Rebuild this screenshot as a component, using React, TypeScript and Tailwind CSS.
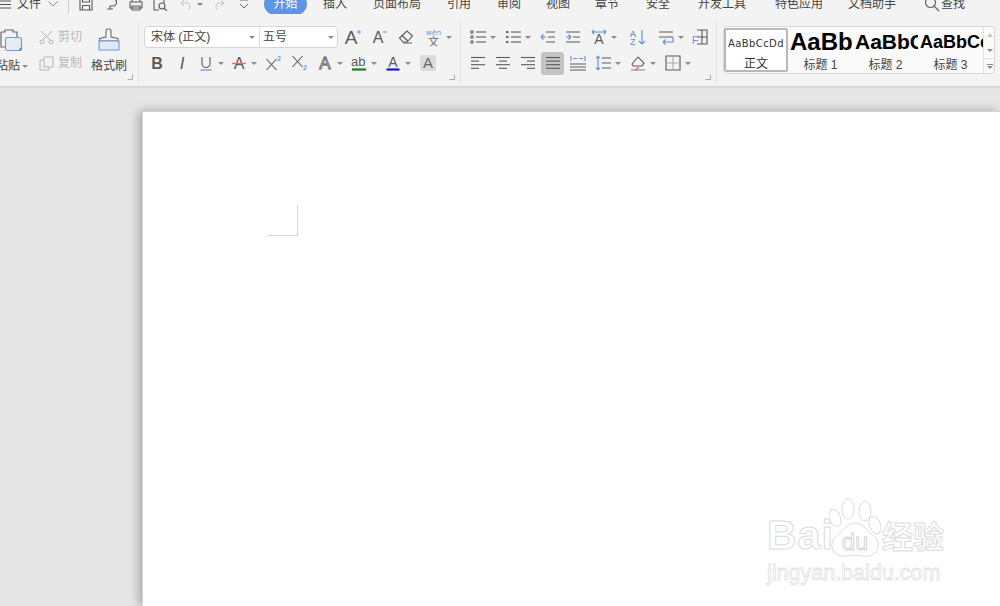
import type { ReactNode } from "react";

const CJK = "font-['Liberation_Sans','Noto_Sans_CJK_SC',sans-serif]";

const TABS = [
  { label: "插入", w: "w-[56px]" },
  { label: "页面布局", w: "w-[68px]" },
  { label: "引用", w: "w-[56px]" },
  { label: "审阅", w: "w-[44px]" },
  { label: "视图", w: "w-[54px]" },
  { label: "章节", w: "w-[44px]" },
  { label: "安全", w: "w-[58px]" },
  { label: "开发工具", w: "w-[70px]" },
  { label: "特色应用", w: "w-[84px]" },
  { label: "文档助手", w: "w-[62px]" },
];

function Ico({ children, w = 16, h = 16 }: { children: ReactNode; w?: number; h?: number }) {
  return (
    <svg width={w} height={h} viewBox={`0 0 ${w} ${h}`} fill="none" stroke="#5a5a5a" strokeWidth="1.1" className="shrink-0">
      {children}
    </svg>
  );
}

function Tri() {
  return <span className="w-0 h-0 shrink-0 border-x-[3px] border-t-[3px] border-x-transparent border-t-[#8a8a8a]" />;
}

function Btn({ w, drop, children }: { w: string; drop?: boolean; children: ReactNode }) {
  return (
    <div className={`${w} h-[22px] shrink-0 flex items-center justify-center gap-[4px]`}>
      {children}
      {drop && <Tri />}
    </div>
  );
}

function Letter({ c, x = 8, y = 13, size = 15, bold, italic, fill = "#5a5a5a" }: { c: string; x?: number; y?: number; size?: number; bold?: boolean; italic?: boolean; fill?: string }) {
  return (
    <text
      x={x}
      y={y}
      textAnchor="middle"
      fontSize={size}
      fontFamily="Liberation Sans"
      fontWeight={bold ? 700 : 400}
      fontStyle={italic ? "italic" : "normal"}
      fill={fill}
      stroke="none"
    >
      {c}
    </text>
  );
}

function Corner() {
  return (
    <svg width="6" height="6" viewBox="0 0 6 6" fill="none" stroke="#a8a8a8" className="absolute right-[5px] bottom-[4px]">
      <path d="M0.5 5.5h5v-5M5.5 5.5" />
    </svg>
  );
}

function Lines({ rows }: { rows: [number, number][] }) {
  return (
    <Ico>
      {rows.map(([x1, x2], i) => (
        <path key={i} d={`M${x1} ${2.5 + i * 3.6}H${x2}`} />
      ))}
    </Ico>
  );
}

function Clipboard() {
  return (
    <svg width="23" height="24" viewBox="0 0 23 24" fill="none" className="shrink-0">
      <path d="M1 4h4V2h8v2h4v6M1 4v15h5" stroke="#6a6a6a" strokeWidth="1.2" />
      <rect x="5.5" y="9.5" width="16" height="13" rx="2" fill="#e6ecf6" stroke="#6f9ce0" strokeWidth="1.2" />
      <path d="M19 22.5l2.5-2.5" stroke="#4a7fd6" strokeWidth="1.5" />
    </svg>
  );
}

function Brush() {
  return (
    <svg width="22" height="24" viewBox="0 0 22 24" fill="none" className="shrink-0">
      <path d="M8 9V2.500a1.500 1.500 0 0 1 1.500-1.500h2A1.500 1.500 0 0 1 13 2.500V9l7 1.500V13H1.500v-2.500z" stroke="#6a6a6a" strokeWidth="1.1" />
      <path d="M1 13h20v9H1z" fill="#dfe8f7" stroke="#6f9ce0" strokeWidth="1.1" />
    </svg>
  );
}

function TopBar() {
  return (
    <div className="h-[14px] overflow-hidden">
      <div className="-mt-[8px] h-[24px] flex items-center text-[12px] text-[#444]">
        <svg width="11" height="9" viewBox="0 0 11 9" stroke="#555" className="shrink-0 mt-[1px]">
          <path d="M0 1h11M0 4.500h11M0 8h11" />
        </svg>
        <span className="ml-[6px] w-[31px]">文件</span>
        <svg width="10" height="6" viewBox="0 0 10 6" fill="none" stroke="#888" className="shrink-0">
          <path d="M0.500 0.500L5 5l4.500-4.500" />
        </svg>
        <span className="ml-[10px] w-px h-[24px] bg-[#d0d0d0] shrink-0" />
        <div className="ml-[10px] flex w-[185px] shrink-0 items-center">
          <div className="w-[26px] flex">
            <Ico w={14} h={14}><path d="M1 1h12v12H1zM3.500 1v4h7V1M3.500 13V8.500h7V13" /></Ico>
          </div>
          <div className="w-[24px] flex">
            <Ico w={14} h={14}><path d="M2 2h6a3.500 3.500 0 0 1 0 7H5v3M2 12h6" /></Ico>
          </div>
          <div className="w-[24px] flex">
            <Ico w={14} h={14}><path d="M3 5V1h8v4M1 5h12v6H1zM3 9h8v4H3z" /></Ico>
          </div>
          <div className="w-[27px] flex">
            <Ico w={15} h={14}><path d="M11 6V1H1v12h5" /><circle cx="9" cy="9" r="3" /><path d="M11 11l3 3" /></Ico>
          </div>
          <div className="w-[17px] flex">
            <svg width="13" height="12" viewBox="0 0 13 12" fill="none" stroke="#c4c4c4"><path d="M1 5l3-3M1 5l3 3M1 5h7a4 4 0 0 1 0 7" /></svg>
          </div>
          <div className="w-[16px] flex items-center"><Tri /></div>
          <div className="w-[26px] flex">
            <svg width="12" height="12" viewBox="0 0 12 12" fill="none" stroke="#c4c4c4"><path d="M11 5L8 2M11 5L8 8M11 5H5a4 4 0 0 0 0 7" /></svg>
          </div>
          <div className="w-[25px] flex">
            <svg width="10" height="10" viewBox="0 0 10 10" fill="none" stroke="#666"><path d="M1 1h8M1 5l4 4 4-4" /></svg>
          </div>
        </div>
        <div className="w-[43px] shrink-0 h-[22px] rounded-full bg-[#5f95e6] text-white text-center leading-[22px]">开始</div>
        {TABS.map((t) => (
          <span key={t.label} className={`${t.w} shrink-0 text-center`}>
            {t.label}
          </span>
        ))}
        <svg width="16" height="16" viewBox="0 0 16 16" fill="none" stroke="#666" strokeWidth="1.2" className="ml-[21px] shrink-0">
          <circle cx="6.500" cy="6.500" r="5" />
          <path d="M10 10l5 5" />
        </svg>
        <span className="ml-px">查找</span>
      </div>
    </div>
  );
}

function ClipGroup() {
  return (
    <div className="relative w-[139px] shrink-0 flex border-r border-[#e2e2e2] pt-[3px] text-[12px] text-[#444]">
      <div className="w-[31px] shrink-0 flex flex-col overflow-hidden">
        <div className="pt-[2px] h-[26px]"><Clipboard /></div>
        <div className="mt-[7px] h-[14px] flex items-center gap-[2px] whitespace-nowrap -ml-[4px]">
          <span>粘贴</span>
          <Tri />
        </div>
      </div>
      <div className="w-[59px] shrink-0 flex flex-col gap-[4px] text-[#b9b9b9]">
        <div className="h-[22px] pl-[8px] flex items-center gap-[4px]">
          <svg width="15" height="15" viewBox="0 0 15 15" fill="none" stroke="#b5b5b5">
            <path d="M2 1l9 9M13 1L4 10" />
            <circle cx="3" cy="12" r="2" />
            <circle cx="12" cy="12" r="2" />
          </svg>
          <span>剪切</span>
        </div>
        <div className="h-[22px] pl-[8px] flex items-center gap-[4px]">
          <svg width="15" height="15" viewBox="0 0 15 15" fill="none" stroke="#b5b5b5">
            <path d="M5 1h9v10H5z" />
            <path d="M5 4H1v10h9v-3" />
          </svg>
          <span>复制</span>
        </div>
      </div>
      <div className="w-[38px] shrink-0 flex flex-col items-center">
        <div className="pt-[2px] h-[26px]"><Brush /></div>
        <span className="mt-[7px] h-[14px] leading-[14px] whitespace-nowrap">格式刷</span>
      </div>
      <Corner />
    </div>
  );
}

function FontGroup() {
  return (
    <div className="relative w-[322px] shrink-0 border-r border-[#e2e2e2] pt-[3px] pl-[5px] flex flex-col gap-[4px]">
      <div className="flex">
        <div className="w-[194px] h-[22px] shrink-0 flex bg-white border border-[#d6d6d6] rounded-[4px] text-[12px] text-[#444]">
          <div className="w-[115px] border-r border-[#e0e0e0] pl-[6px] pr-[4px] flex items-center justify-between">
            <span>宋体 (正文)</span>
            <Tri />
          </div>
          <div className="flex-1 pl-[3px] pr-[3px] flex items-center justify-between">
            <span>五号</span>
            <Tri />
          </div>
        </div>
        <div className="ml-[2px] flex">
          <Btn w="w-[26px]">
            <Ico w={18} h={18}><Letter c="A" x={7} y={16} size={19} /><path d="M13 4h4M15 2v4" stroke="#6f9ce0" /></Ico>
          </Btn>
          <Btn w="w-[26px]">
            <Ico><Letter c="A" x={7} y={14} size={16} /><path d="M12 3h4" stroke="#6f9ce0" /></Ico>
          </Btn>
          <Btn w="w-[28px]">
            <Ico><path d="M1.500 9L9 2l5.500 5L9 13H5z" /><path d="M4 6.500L10 12M5 14h9" /></Ico>
          </Btn>
          <Btn w="w-[36px]" drop>
            <svg width="17" height="18" viewBox="0 0 17 18" className="shrink-0">
              <text x="8.500" y="6.500" textAnchor="middle" fontSize="7.500" fontFamily="DejaVu Sans" fill="#6f9ce0">wén</text>
              <text x="8.500" y="17.500" textAnchor="middle" fontSize="11" fontFamily="Noto Sans CJK SC" fill="#666">文</text>
            </svg>
          </Btn>
        </div>
      </div>
      <div className="flex">
        <Btn w="w-[25px]"><Ico><Letter c="B" size={16} y={14} bold /></Ico></Btn>
        <Btn w="w-[25px]"><Ico><Letter c="I" size={17} y={14} italic /></Ico></Btn>
        <Btn w="w-[33px]" drop>
          <Ico><path d="M4 2v6.500a4 4 0 0 0 8 0V2" /><path d="M2.500 15h11" stroke="#6f9ce0" strokeWidth="1.400" /></Ico>
        </Btn>
        <Btn w="w-[34px]" drop>
          <Ico><Letter c="A" size={16} y={14} /><path d="M1 8.500h14" stroke="#e06a6a" strokeWidth="1.300" /></Ico>
        </Btn>
        <Btn w="w-[26px]">
          <Ico><path d="M0.500 4l10 11M10.500 4l-10 11" /><text x="11" y="6" fontSize="7" fontWeight="700" fontFamily="Liberation Sans" fill="#6f9ce0" stroke="none">2</text></Ico>
        </Btn>
        <Btn w="w-[26px]">
          <Ico><path d="M0.500 1l10 11M10.500 1l-10 11" /><text x="11" y="15" fontSize="7" fontWeight="700" fontFamily="Liberation Sans" fill="#6f9ce0" stroke="none">2</text></Ico>
        </Btn>
        <Btn w="w-[34px]" drop>
          <Ico><text x="8" y="14" textAnchor="middle" fontSize="17" fontFamily="Liberation Sans" fill="#f3f3f3" stroke="#5a5a5a" strokeWidth="0.800">A</text></Ico>
        </Btn>
        <Btn w="w-[34px]" drop>
          <Ico>
            <text x="0" y="11" fontSize="13" fontFamily="Liberation Sans" fill="#5a5a5a" stroke="none">ab</text>
            <path d="M1 14.500h14" stroke="#0a8a0a" strokeWidth="2.200" />
          </Ico>
        </Btn>
        <Btn w="w-[34px]" drop>
          <Ico>
            <text x="8" y="12" textAnchor="middle" fontSize="14" fontFamily="Liberation Sans" fill="#5a5a5a" stroke="none">A</text>
            <path d="M1.500 14.500h13" stroke="#1414e0" strokeWidth="2.200" />
          </Ico>
        </Btn>
        <Btn w="w-[26px]">
          <div className="w-[16px] h-[16px] bg-[#dcdcdc] rounded-[2px] flex items-center justify-center">
            <Ico><Letter c="A" size={15} fill="#666" /></Ico>
          </div>
        </Btn>
      </div>
      <Corner />
    </div>
  );
}

function ListIcon({ dots }: { dots: boolean }) {
  return (
    <Ico>
      {[3, 8, 13].map((y) => (
        <g key={y}>
          {dots ? (
            <circle cx="2" cy={y} r="1.200" />
          ) : (
            <path d={`M1 ${y}h2.500`} strokeWidth="1.800" />
          )}
          <path d={`M6 ${y}h10`} />
        </g>
      ))}
    </Ico>
  );
}

function ParaGroup() {
  return (
    <div className="relative w-[256px] shrink-0 border-r border-[#e2e2e2] pt-[3px] pl-[5px] flex flex-col gap-[4px]">
      <div className="flex">
        <Btn w="w-[34px]" drop><ListIcon dots /></Btn>
        <Btn w="w-[35px]" drop><ListIcon dots={false} /></Btn>
        <Btn w="w-[25px]">
          <Ico><path d="M6 3h9M8 8h7M6 13h9" /><path d="M6 8H1M1 8l2.500-2.500M1 8l2.500 2.500" stroke="#5b8fdf" /></Ico>
        </Btn>
        <Btn w="w-[25px]">
          <Ico><path d="M1 3h14M1 13h14M8 8h7" /><path d="M1 8h5M6 8L3.500 5.500M6 8l-2.500 2.500" stroke="#5b8fdf" /></Ico>
        </Btn>
        <Btn w="w-[38px]" drop>
          <Ico>
            <Letter c="A" size={14} y={15} />
            <path d="M1 3h14M1 3l2-2M1 3l2 2M15 3l-2-2M15 3l-2 2" stroke="#5b8fdf" />
          </Ico>
        </Btn>
        <Btn w="w-[30px]">
          <Ico>
            <text x="0" y="7.500" fontSize="9" fontFamily="Liberation Sans" fill="#5a5a5a" stroke="none">A</text>
            <text x="0" y="15.500" fontSize="9" fontFamily="Liberation Sans" fill="#5b8fdf" stroke="none">Z</text>
            <path d="M12 1v14M12 15l-3-3M12 15l3-3" stroke="#5b8fdf" />
          </Ico>
        </Btn>
        <Btn w="w-[35px]" drop>
          <Ico><path d="M1 3h14M1 8h14" /><path d="M15 8v5H5M5 13l2.500-2.500M5 13l2.500 2.500" stroke="#5b8fdf" /></Ico>
        </Btn>
        <Btn w="w-[24px]">
          <Ico>
            <path d="M5 1h10v14H5M10 1v14M5 8h10" />
            <text x="0" y="15" fontSize="10" fontFamily="Liberation Sans" fill="#5b8fdf" stroke="none">F</text>
          </Ico>
        </Btn>
      </div>
      <div className="flex">
        <Btn w="w-[24px]"><Lines rows={[[1, 15], [1, 9], [1, 15], [1, 9]]} /></Btn>
        <Btn w="w-[25px]"><Lines rows={[[1, 15], [4, 12], [1, 15], [4, 12]]} /></Btn>
        <Btn w="w-[25px]"><Lines rows={[[1, 15], [7, 15], [1, 15], [7, 15]]} /></Btn>
        <Btn w="w-[25px]">
          <div className="w-[23px] h-[23px] bg-[#c4c4c4] rounded-[3px] flex items-center justify-center">
            <Lines rows={[[1, 15], [1, 15], [1, 15], [1, 15]]} />
          </div>
        </Btn>
        <Btn w="w-[25px]">
          <Ico>
            <path d="M1 1v5M15 1v5M3 3.500h4M9 3.500h4" stroke="#5b8fdf" />
            <path d="M0 9h16M0 12h16M0 15h16" />
          </Ico>
        </Btn>
        <Btn w="w-[35px]" drop>
          <Ico>
            <path d="M3 1v14M3 1L1 3.500M3 1l2 2.500M3 15l-2-2.500M3 15l2-2.500" stroke="#5b8fdf" />
            <path d="M7 3h9M7 8h9M7 13h9" />
          </Ico>
        </Btn>
        <Btn w="w-[35px]" drop>
          <Ico>
            <path d="M2 9l6-7 6 6-2 3H3z" />
            <path d="M1 15h14" stroke="#aaa" strokeWidth="1.600" />
            <path d="M5 15l4-3" stroke="#e06a6a" strokeWidth="1.300" />
          </Ico>
        </Btn>
        <Btn w="w-[35px]" drop>
          <Ico><path d="M1 1h14v14H1z" /><path d="M8 1v14M1 8h14" stroke="#aaa" /></Ico>
        </Btn>
      </div>
      <Corner />
    </div>
  );
}

function StyleCell({ label, children }: { label: string; children: ReactNode }) {
  return (
    <div className="w-[65px] shrink-0 flex flex-col items-center">
      <div className="w-full h-[30px] overflow-hidden flex items-center whitespace-nowrap font-['Liberation_Sans',sans-serif] font-bold text-black">
        {children}
      </div>
      <span className="h-[16px] leading-[16px] text-[12px] text-[#444]">{label}</span>
    </div>
  );
}

function StyleGroup() {
  return (
    <div className="pt-[3px] pl-[6px]">
      <div className="w-[272px] h-[48px] flex bg-[#fafafa] border border-[#d8d8d8] rounded-[4px] overflow-hidden">
        <div className="w-[64px] shrink-0 my-px bg-white border-2 border-[#b8b8b8] rounded-[2px] flex flex-col items-center">
          <span className="h-[27px] leading-[27px] text-[10px] tracking-[0.4px] text-[#333] whitespace-nowrap font-['DejaVu_Sans',sans-serif]">AaBbCcDd</span>
          <span className="h-[15px] leading-[15px] text-[12px] text-[#333]">正文</span>
        </div>
        <StyleCell label="标题 1"><span className="pl-[2px] text-[24px]">AaBb</span></StyleCell>
        <StyleCell label="标题 2"><span className="pl-[2px] text-[21px]">AaBbCc</span></StyleCell>
        <StyleCell label="标题 3"><span className="pl-[2px] text-[18px]">AaBbCcDd</span></StyleCell>
        <div className="w-[13px] shrink-0 border-l border-[#e2e2e2] flex flex-col text-[#999]">
          <div className="h-[16px] flex items-center justify-center">
            <span className="w-0 h-0 border-x-[3px] border-b-[4px] border-x-transparent border-b-[#c8c8c8]" />
          </div>
          <div className="h-[16px] flex items-center justify-center border-b border-[#e2e2e2]">
            <Tri />
          </div>
          <div className="flex-1 flex flex-col items-center justify-center gap-px">
            <span className="w-[6px] h-px bg-[#8a8a8a]" />
            <Tri />
          </div>
        </div>
      </div>
    </div>
  );
}

function Watermark() {
  const outline = "text-white [-webkit-text-stroke:1px_#dcdcdc]";
  return (
    <div className="absolute left-[767px] top-[498px] w-[180px] flex flex-col font-['Liberation_Sans','Noto_Sans_CJK_SC',sans-serif]">
      <div className="flex items-end h-[60px]">
        <span className={`w-[62px] mb-[2px] text-[41px] leading-[42px] font-bold tracking-[1px] ${outline}`}>Bai</span>
        <svg width="52" height="60" viewBox="0 0 52 60" fill="white" stroke="#dcdcdc" className="shrink-0">
          <ellipse cx="6" cy="20" rx="5.500" ry="9" transform="rotate(-20 6 20)" />
          <ellipse cx="19" cy="11" rx="6" ry="10" />
          <ellipse cx="36" cy="13" rx="6" ry="10" />
          <ellipse cx="46" cy="27" rx="5.500" ry="9" transform="rotate(-20 46 27)" />
          <path d="M26 25c7 0 11 6 15 10 6 4 9 8 8 14-1 8-9 10-16 9-5-1-9-1-14 0-7 1-15-1-16-9-1-6 3-10 8-14 5-4 8-10 15-10z" />
          <text x="26" y="52" textAnchor="middle" fontSize="24" fontFamily="Liberation Sans" fill="white" stroke="#cfcfcf" strokeWidth="0.800">du</text>
        </svg>
        <span className={`ml-px mb-[2px] text-[31px] leading-[36px] font-bold whitespace-nowrap ${outline}`}>经验</span>
      </div>
      <span className="mt-[3px] text-[21.500px] leading-[24px] whitespace-nowrap text-white [-webkit-text-stroke:0.800px_#e0e0e0]">jingyan.baidu.com</span>
    </div>
  );
}

export default function App() {
  return (
    <div className={`relative w-[1000px] h-[606px] overflow-hidden flex flex-col bg-[#e6e6e6] ${CJK}`}>
      <div className="h-[86px] shrink-0 bg-[#f3f3f3] shadow-[0_1px_2px_rgba(0,0,0,0.12)] z-10">
        <TopBar />
        <div className="h-[72px] flex pt-[9px] pb-[2px]">
          <ClipGroup />
          <FontGroup />
          <ParaGroup />
          <StyleGroup />
        </div>
      </div>
      <div className="flex-1 pl-[142px] pt-[25px] min-h-0">
        <div className="h-full bg-white border-l border-t border-[#d4d4d4] shadow-[-3px_0_10px_rgba(0,0,0,0.28)] pl-[124px] pt-[93px]">
          <div className="w-[31px] h-[31px] border-r border-b border-[#d6d6d6]" />
        </div>
      </div>
      <Watermark />
    </div>
  );
}
